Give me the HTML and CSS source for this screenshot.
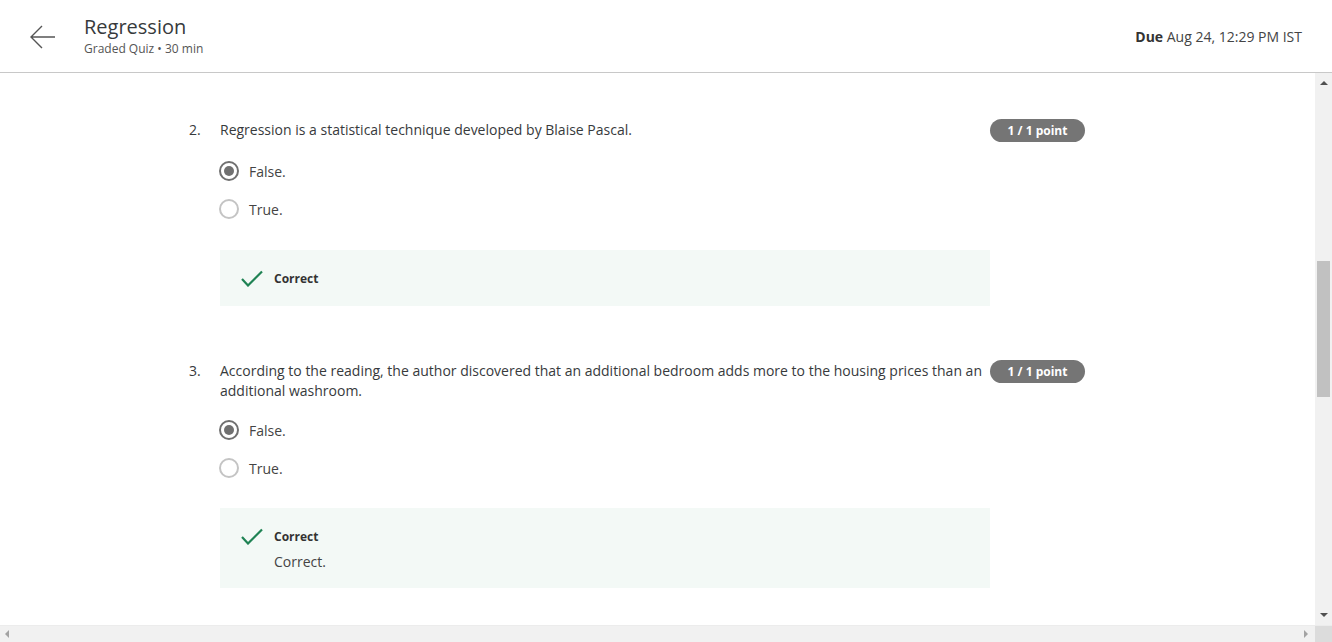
FILE: index.html
```html
<!DOCTYPE html>
<html lang="en">
<head>
<meta charset="utf-8">
<title>Regression</title>
<link rel="stylesheet" href="styles.css">
</head>
<body>
<div class="page">
  <header class="header">
    <div class="back">
      <svg width="28" height="24" viewBox="0 0 28 24"><path d="M26 12H2M13 1L2 12l11 11" fill="none" stroke="#555" stroke-width="1.4"/></svg>
    </div>
    <div class="titles">
      <div class="title">Regression</div>
      <div class="subtitle">Graded Quiz • 30 min</div>
    </div>
    <div class="due"><b>Due</b> Aug 24, 12:29 PM IST</div>
  </header>
  <div class="middle">
    <main class="content">
      <section class="question">
        <div class="qrow">
          <span class="qnum">2.</span>
          <p class="qtext">Regression is a statistical technique developed by Blaise Pascal.</p>
          <span class="badge">1 / 1 point</span>
        </div>
        <div class="opts">
          <div class="opt"><span class="radio checked"></span><span>False.</span></div>
          <div class="opt"><span class="radio"></span><span>True.</span></div>
        </div>
        <div class="feedback">
          <div class="fbhead">
            <svg class="check" width="22" height="17" viewBox="0 0 22 17"><path d="M1 9l6 6.5L21 1.5" fill="none" stroke="#1f8354" stroke-width="2.2"/></svg>
            <span class="fbtitle">Correct</span>
          </div>
        </div>
      </section>
      <section class="question q3">
        <div class="qrow">
          <span class="qnum">3.</span>
          <p class="qtext">According to the reading, the author discovered that an additional bedroom adds more to the housing prices than an additional washroom.</p>
          <span class="badge">1 / 1 point</span>
        </div>
        <div class="opts">
          <div class="opt"><span class="radio checked"></span><span>False.</span></div>
          <div class="opt"><span class="radio"></span><span>True.</span></div>
        </div>
        <div class="feedback">
          <div class="fbhead">
            <svg class="check" width="22" height="17" viewBox="0 0 22 17"><path d="M1 9l6 6.5L21 1.5" fill="none" stroke="#1f8354" stroke-width="2.2"/></svg>
            <span class="fbtitle">Correct</span>
          </div>
          <div class="fbtext">Correct.</div>
        </div>
      </section>
    </main>
    <div class="vscroll">
      <span class="arr up"></span>
      <div class="vtrack"><div class="vthumb"></div></div>
      <span class="arr down"></span>
    </div>
  </div>
  <div class="hscroll">
    <span class="arr left"></span>
    <div class="htrack"></div>
    <span class="arr right"></span>
    <div class="corner"></div>
  </div>
</div>
</body>
</html>
```
FILE: styles.css
```css
* { box-sizing: border-box; }
html, body { margin: 0; padding: 0; }
body {
  font-family: "Open Sans", "Noto Sans", sans-serif;
  color: #373a3c;
  background: #fff;
  overflow: hidden;
}
.page {
  width: 1332px;
  height: 642px;
  display: flex;
  flex-direction: column;
}
.header {
  height: 73px;
  flex: none;
  border-bottom: 1px solid #c8c8c8;
  display: flex;
  align-items: center;
  padding: 0 30px 0 29px;
}
.back {
  width: 55px;
  display: flex;
  align-items: center;
  padding-top: 1px;
}
.titles {
  flex: 1;
  display: flex;
  flex-direction: column;
}
.title {
  font-size: 20px;
  line-height: 26px;
  color: #373a3c;
}
.subtitle {
  font-size: 12px;
  line-height: 18px;
  color: #555;
}
.due {
  font-size: 14px;
  color: #444;
}
.due b { font-weight: 700; color: #333; }

.middle {
  flex: 1;
  display: flex;
  min-height: 0;
}
.content {
  flex: 1;
  padding: 47px 0 0 189px;
  overflow: hidden;
}
.question { width: 896px; }
.q3 { margin-top: 55px; }
.qrow {
  display: flex;
  align-items: flex-start;
  font-size: 14px;
  line-height: 20px;
}
.qnum { width: 31px; flex: none; }
.qtext {
  margin: 0;
  flex: 1;
  padding-right: 6px;
}
.badge {
  flex: none;
  width: 95px;
  height: 23px;
  margin-top: -1px;
  border-radius: 12px;
  background: #757575;
  color: #fff;
  font-size: 12px;
  font-weight: 700;
  display: flex;
  align-items: center;
  justify-content: center;
}
.opts {
  margin: 10px 0 0 30px;
}
.opt {
  height: 38px;
  display: flex;
  align-items: center;
  font-size: 14px;
  color: #444;
}
.radio {
  width: 20px;
  height: 20px;
  border-radius: 50%;
  border: 2px solid #c4c4c4;
  margin-right: 10px;
  display: flex;
  align-items: center;
  justify-content: center;
}
.radio.checked { border-color: #707070; }
.radio.checked::after {
  content: "";
  width: 10px;
  height: 10px;
  border-radius: 50%;
  background: #707070;
}
.feedback {
  margin: 22px 0 0 31px;
  width: 770px;
  background: #f3f9f6;
  padding: 18px 21px 18px 21px;
}
.q3 .feedback { margin-top: 21px; padding-bottom: 16px; }
.fbhead {
  display: flex;
  align-items: center;
  height: 20px;
}
.check { margin-right: 11px; }
.fbtitle {
  font-size: 12px;
  font-weight: 700;
  color: #333;
}
.fbtext {
  margin: 6px 0 0 33px;
  font-size: 14px;
  line-height: 20px;
  color: #444;
}

.vscroll {
  width: 17px;
  flex: none;
  background: #f1f1f1;
  display: flex;
  flex-direction: column;
  align-items: center;
}
.vtrack { flex: 1; width: 100%; padding-top: 172px; }
.vthumb {
  width: 13px;
  height: 136px;
  margin: 0 auto;
  background: #c1c1c1;
}
.arr { width: 0; height: 0; flex: none; }
.up { margin: 8px 0 4px; border-left: 4px solid transparent; border-right: 4px solid transparent; border-bottom: 4px solid #505050; }
.down { margin: 4px 0 8px; border-left: 4px solid transparent; border-right: 4px solid transparent; border-top: 4px solid #505050; }
.hscroll {
  height: 17px;
  flex: none;
  display: flex;
  align-items: center;
  background: #f1f1f1;
  border-top: 1px solid #ececec;
}
.htrack { flex: 1; }
.left { margin-left: 5px; border-top: 4px solid transparent; border-bottom: 4px solid transparent; border-right: 4px solid #a3a3a3; }
.right { margin-right: 7px; border-top: 4px solid transparent; border-bottom: 4px solid transparent; border-left: 4px solid #a3a3a3; }
.corner { width: 17px; height: 17px; background: #dcdcdc; align-self: stretch; }
```
